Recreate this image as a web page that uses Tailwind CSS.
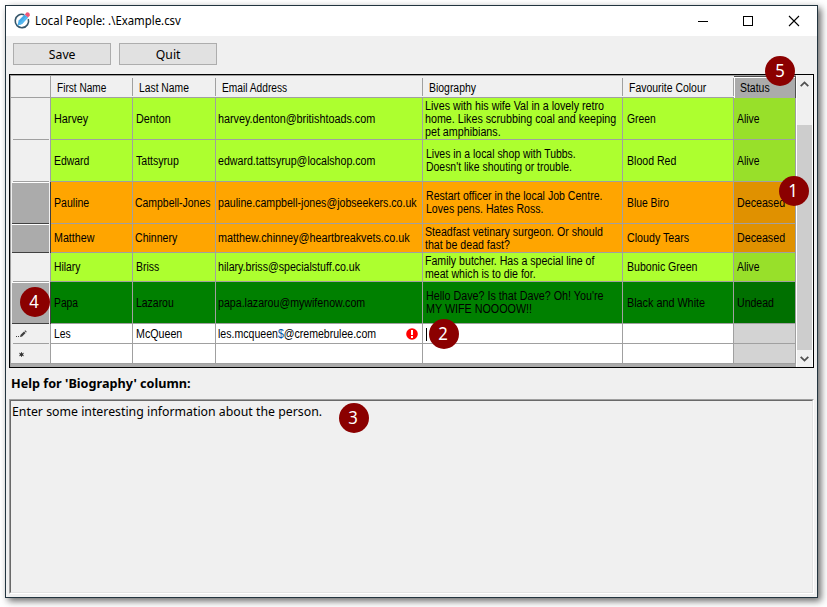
<!DOCTYPE html>
<html lang="en">
<head>
<meta charset="utf-8">
<title>Local People</title>
<script src="https://cdn.jsdelivr.net/npm/@tailwindcss/browser@4"></script>
</head>
<body class="relative h-[607px] w-[827px] overflow-hidden bg-white pt-[5px] pl-[5px] font-['Noto_Sans',sans-serif] text-black">
<div class="flex h-[593px] w-[813px] flex-col border border-[#22343f] bg-[#f0f0f0] shadow-[3px_3px_7px_rgba(0,0,0,0.6)]">
  <header class="flex h-[30px] shrink-0 items-center bg-white">
    <svg class="ml-[7px] h-[18px] w-[18px] shrink-0" viewBox="0 0 18 18" fill="none">
      <path d="M11.2 2.7A6.7 6.7 0 1 0 15.3 7" stroke="#35566a" stroke-width="1.6"/>
      <path d="M4.6 13.6 5.6 8.6 11.6 2.4 15 5.5 9 12Z" fill="#45a9e8"/>
      <path d="M4.6 13.6 9 12 15 5.5 13.4 4Z" fill="#55b8f0"/>
      <path d="M11.8 2.4 13.8.3Q17 .2 16.8 3.4L15 5.5Z" fill="#ef5777"/>
    </svg>
    <span class="ml-[4px] inline-block w-[400px] origin-left scale-x-[.948] text-[12px] leading-[16px] whitespace-nowrap">Local People: .\Example.csv</span>
    <svg class="ml-auto h-[12px] w-[104px] shrink-0 mr-[16px]" viewBox="0 0 104 12" fill="none" stroke="#000" shape-rendering="crispEdges">
      <path d="M1 6.5H11"/><path d="M46.5 1.5H55.5V10.5H46.5Z"/><path d="M92 1 102 11M102 1 92 11" shape-rendering="auto" stroke-width="1.1"/>
    </svg>
  </header>
  <div class="flex shrink-0 gap-2 pt-[7px] pl-[7px] text-[13px]">
    <button class="h-[22px] w-[98px] border border-[#adadad] bg-[#e1e1e1] leading-[19px]"><span class="inline-block scale-x-[.94]">Save</span></button>
    <button class="h-[22px] w-[98px] border border-[#adadad] bg-[#e1e1e1] leading-[19px]"><span class="inline-block scale-x-[.94]">Quit</span></button>
  </div>

  <div class="mt-[9px] ml-[3px] flex h-[294px] w-[805px] shrink-0 border border-black bg-[#ababab] font-['Liberation_Sans',sans-serif] text-[12px] leading-[13px] whitespace-nowrap">
    <div class="w-[786px] border-t border-l border-[#a0a0a0]">
      <div class="grid h-[22px] grid-cols-[40px_82px_83px_207px_200px_111px_62px] border-b border-[#a0a0a0] bg-[#f0f0f0] leading-[25px]">
        <div class="border-r border-[#a0a0a0]"></div>
        <div class="relative pl-[6px] after:absolute after:top-[2px] after:right-0 after:h-[18px] after:w-px after:bg-[#a0a0a0]"><span class="inline-block origin-left scale-x-[.84]">First Name</span></div>
        <div class="relative pl-[6px] after:absolute after:top-[2px] after:right-0 after:h-[18px] after:w-px after:bg-[#a0a0a0]"><span class="inline-block origin-left scale-x-[.86]">Last Name</span></div>
        <div class="relative pl-[6px] after:absolute after:top-[2px] after:right-0 after:h-[18px] after:w-px after:bg-[#a0a0a0]"><span class="inline-block origin-left scale-x-[.85]">Email Address</span></div>
        <div class="relative pl-[6px] after:absolute after:top-[2px] after:right-0 after:h-[18px] after:w-px after:bg-[#a0a0a0]"><span class="inline-block origin-left scale-x-[.87]">Biography</span></div>
        <div class="relative pl-[6px] after:absolute after:top-[2px] after:right-0 after:h-[18px] after:w-px after:bg-[#a0a0a0]"><span class="inline-block origin-left scale-x-[.87]">Favourite Colour</span></div>
        <div class="-mb-px border-t border-r border-b border-[#505050] bg-[#ababab] pl-[6px] leading-[23px] shadow-[inset_1px_1px_#fff]"><span class="inline-block origin-left scale-x-[.87]">Status</span></div>
      </div>

      <div class="grid h-[42px] grid-cols-[40px_82px_83px_207px_200px_111px_62px] bg-[#adff2f] *:flex *:items-center *:border-r *:border-b *:border-[#a0a0a0] *:pt-px *:pl-[3px]">
        <div class="!border-b-0 bg-[#f0f0f0] !py-0 !pr-px !pl-[2px]"><div class="h-full w-full border-b border-[#a0a0a0]"></div></div>
        <div><span class="origin-left scale-x-[.9]">Harvey</span></div>
        <div><span class="origin-left scale-x-[.9]">Denton</span></div>
        <div><span class="-ml-px origin-left scale-x-[.9]">harvey.denton@britishtoads.com</span></div>
        <div><span class="-ml-px origin-left scale-x-[.893]">Lives with his wife Val in a lovely retro<br>home. Likes scrubbing coal and keeping<br>pet amphibians.</span></div>
        <div><span class="ml-px origin-left scale-x-[.86]">Green</span></div>
        <div class="bg-[#98e02a]"><span class="origin-left scale-x-[.86]">Alive</span></div>
      </div>
      <div class="grid h-[42px] grid-cols-[40px_82px_83px_207px_200px_111px_62px] bg-[#adff2f] *:flex *:items-center *:border-r *:border-b *:border-[#a0a0a0] *:pt-px *:pl-[3px]">
        <div class="!border-b-0 bg-[#f0f0f0] !py-0 !pr-px !pl-[2px]"><div class="h-full w-full border-b border-[#a0a0a0]"></div></div>
        <div><span class="origin-left scale-x-[.87]">Edward</span></div>
        <div><span class="origin-left scale-x-[.88]">Tattsyrup</span></div>
        <div><span class="-ml-px origin-left scale-x-[.886]">edward.tattsyrup@localshop.com</span></div>
        <div><span class="origin-left scale-x-[.87]">Lives in a local shop with Tubbs.<br>Doesn't like shouting or trouble.</span></div>
        <div><span class="ml-px origin-left scale-x-[.88]">Blood Red</span></div>
        <div class="bg-[#98e02a]"><span class="origin-left scale-x-[.86]">Alive</span></div>
      </div>
      <div class="grid h-[42px] grid-cols-[40px_82px_83px_207px_200px_111px_62px] bg-[#ffa500] *:flex *:items-center *:border-r *:border-b *:border-[#a0a0a0] *:pt-px *:pl-[3px]">
        <div class="!border-r-[#404040] !border-b-0 bg-[#f0f0f0] !py-0 !pr-px !pl-px"><div class="h-full w-full border-t border-b border-t-white border-b-[#404040] bg-[#ababab]"></div></div>
        <div><span class="origin-left scale-x-[.88]">Pauline</span></div>
        <div><span class="-ml-px origin-left scale-x-[.87]">Campbell-Jones</span></div>
        <div><span class="-ml-px origin-left scale-x-[.883]">pauline.campbell-jones@jobseekers.co.uk</span></div>
        <div><span class="origin-left scale-x-[.88]">Restart officer in the local Job Centre.<br>Loves pens. Hates Ross.</span></div>
        <div><span class="ml-px origin-left scale-x-[.86]">Blue Biro</span></div>
        <div class="bg-[#e09100]"><span class="origin-left scale-x-[.89]">Deceased</span></div>
      </div>
      <div class="grid h-[29px] grid-cols-[40px_82px_83px_207px_200px_111px_62px] bg-[#ffa500] *:flex *:items-center *:border-r *:border-b *:border-[#a0a0a0] *:pt-px *:pl-[3px]">
        <div class="!border-r-[#404040] !border-b-0 bg-[#f0f0f0] !py-0 !pr-px !pl-px"><div class="h-full w-full border-t border-b border-t-white border-b-[#404040] bg-[#ababab]"></div></div>
        <div><span class="origin-left scale-x-[.89]">Matthew</span></div>
        <div><span class="-ml-px origin-left scale-x-[.88]">Chinnery</span></div>
        <div><span class="-ml-px origin-left scale-x-[.9]">matthew.chinney@heartbreakvets.co.uk</span></div>
        <div><span class="-ml-px origin-left scale-x-[.883]">Steadfast vetinary surgeon. Or should<br>that be dead fast?</span></div>
        <div><span class="ml-px origin-left scale-x-[.89]">Cloudy Tears</span></div>
        <div class="bg-[#e09100]"><span class="origin-left scale-x-[.89]">Deceased</span></div>
      </div>
      <div class="grid h-[29px] grid-cols-[40px_82px_83px_207px_200px_111px_62px] bg-[#adff2f] *:flex *:items-center *:border-r *:border-b *:border-[#a0a0a0] *:pt-px *:pl-[3px]">
        <div class="!border-b-0 bg-[#f0f0f0] !py-0 !pr-px !pl-[2px]"><div class="h-full w-full border-b border-[#a0a0a0]"></div></div>
        <div><span class="origin-left scale-x-[.86]">Hilary</span></div>
        <div><span class="origin-left scale-x-[.87]">Briss</span></div>
        <div><span class="-ml-px origin-left scale-x-[.885]">hilary.briss@specialstuff.co.uk</span></div>
        <div><span class="-ml-px origin-left scale-x-[.882]">Family butcher. Has a special line of<br>meat which is to die for.</span></div>
        <div><span class="ml-px origin-left scale-x-[.88]">Bubonic Green</span></div>
        <div class="bg-[#98e02a]"><span class="origin-left scale-x-[.86]">Alive</span></div>
      </div>
      <div class="grid h-[42px] grid-cols-[40px_82px_83px_207px_200px_111px_62px] bg-[#008000] *:flex *:items-center *:border-r *:border-b *:border-[#a0a0a0] *:pt-px *:pl-[3px]">
        <div class="!border-r-[#404040] !border-b-0 bg-[#f0f0f0] !py-0 !pr-px !pl-px"><div class="h-full w-full border-t border-b border-t-white border-b-[#404040] bg-[#ababab]"></div></div>
        <div><span class="origin-left scale-x-[.86]">Papa</span></div>
        <div><span class="origin-left scale-x-[.87]">Lazarou</span></div>
        <div><span class="-ml-px origin-left scale-x-[.885]">papa.lazarou@mywifenow.com</span></div>
        <div><span class="origin-left scale-x-[.895]">Hello Dave? Is that Dave? Oh! You're<br>MY WIFE NOOOOW!!</span></div>
        <div><span class="ml-px origin-left scale-x-[.9]">Black and White</span></div>
        <div class="bg-[#007000]"><span class="origin-left scale-x-[.88]">Undead</span></div>
      </div>
      <div class="grid h-[20px] grid-cols-[40px_82px_83px_207px_200px_111px_62px] bg-white *:flex *:items-center *:border-r *:border-b *:border-[#a0a0a0] *:pt-px *:pl-[3px]">
        <div class="!border-b-0 bg-[#f0f0f0] !py-0 !pr-px !pl-[2px]"><div class="flex h-full w-full items-center border-b border-[#a0a0a0]"><svg class="ml-[3px] h-[8px] w-[11px]" viewBox="0 0 11 8" fill="#404040"><path d="M0 6h1v1H0zM2 6h1v1H2zM4 7 4.6 4.8 8 1.4 9.6 3 6.2 6.4ZM8.5.9 9.2.2 10.8 1.8 10.1 2.5Z"/></svg></div></div>
        <div><span class="origin-left scale-x-[.86]">Les</span></div>
        <div><span class="origin-left scale-x-[.89]">McQueen</span></div>
        <div><span class="-ml-px origin-left scale-x-[.88]">les.mcqueen<span class="text-[#0050a0]">$</span>@cremebrulee.com</span><svg class="mr-[4px] ml-auto h-[12px] w-[12px] shrink-0" viewBox="0 0 12 12"><circle cx="6" cy="6" r="5.8" fill="#f00"/><path d="M5 2h2v5H5zM5 8h2v2H5z" fill="#fff"/></svg></div>
        <div><i class="block h-[13px] w-px bg-black"></i></div>
        <div></div>
        <div class="bg-[#d3d3d3]"></div>
      </div>
      <div class="grid h-[20px] grid-cols-[40px_82px_83px_207px_200px_111px_62px] bg-white *:flex *:items-center *:border-r *:border-b *:border-[#a0a0a0] *:pt-px *:pl-[3px]">
        <div class="bg-[#f0f0f0]"><svg class="ml-[4px] h-[7px] w-[7px]" viewBox="0 0 7 7" stroke="#606060"><path d="M3.5 1v5M1.1 2.1l4.8 2.8M5.9 2.1 1.1 4.9"/><circle cx="3.5" cy="3.5" r="1.6" stroke="none" fill="#303030"/></svg></div>
        <div></div><div></div><div></div><div></div><div></div>
        <div class="bg-[#d3d3d3]"></div>
      </div>
    </div>
    <div class="flex w-[17px] flex-col border-x border-white bg-[#f0f0f0]">
      <div class="flex h-[50px] items-start justify-center pt-[6px]"><svg class="h-[6px] w-[9px]" viewBox="0 0 9 6" fill="none" stroke="#505050" stroke-width="1.8"><path d="M.7 5.2 4.5 1.4 8.3 5.2"/></svg></div>
      <div class="h-[225px] bg-[#cdcdcd]"></div>
      <div class="flex flex-1 items-center justify-center"><svg class="h-[6px] w-[9px]" viewBox="0 0 9 6" fill="none" stroke="#505050" stroke-width="1.8"><path d="M.7.8 4.5 4.6 8.3.8"/></svg></div>
    </div>
  </div>

  <h2 class="mt-[6px] ml-[5px] h-[18px] shrink-0 text-[13px] leading-[18px] font-bold"><span class="inline-block origin-left scale-x-[.973]">Help for 'Biography' column:</span></h2>
  <div class="mt-[7px] ml-[3px] h-[195px] w-[805px] shrink-0 border border-t-[#a0a0a0] border-r-white border-b-white border-l-[#a0a0a0]">
    <div class="h-full border border-t-[#696969] border-r-[#e3e3e3] border-b-[#e3e3e3] border-l-[#696969] pt-px pl-px text-[13px] leading-[18px]"><span class="inline-block origin-left scale-x-[.947]">Enter some interesting information about the person.</span></div>
  </div>
</div>

<!-- Numbered callouts -->
<div class="absolute top-[56px] left-[765px] h-[30px] w-[30px] rounded-full bg-[#8b0000] text-center text-[18px] leading-[28px] text-white"><span class="inline-block scale-x-[.93]">5</span></div>
<div class="absolute top-[176px] left-[779px] h-[30px] w-[30px] rounded-full bg-[#8b0000] text-center text-[18px] leading-[28px] text-white"><span class="-ml-[2px] inline-block scale-x-[.93]">1</span></div>
<div class="absolute top-[319px] left-[429px] h-[30px] w-[30px] rounded-full bg-[#8b0000] text-center text-[18px] leading-[28px] text-white"><span class="-ml-[2px] inline-block scale-x-[.93]">2</span></div>
<div class="absolute top-[403px] left-[339px] h-[30px] w-[30px] rounded-full bg-[#8b0000] text-center text-[18px] leading-[28px] text-white"><span class="-ml-px inline-block scale-x-[.93]">3</span></div>
<div class="absolute top-[287px] left-[20px] h-[30px] w-[30px] rounded-full bg-[#8b0000] text-center text-[18px] leading-[28px] text-white"><span class="-ml-[2px] inline-block scale-x-[.93]">4</span></div>
</body>
</html>
